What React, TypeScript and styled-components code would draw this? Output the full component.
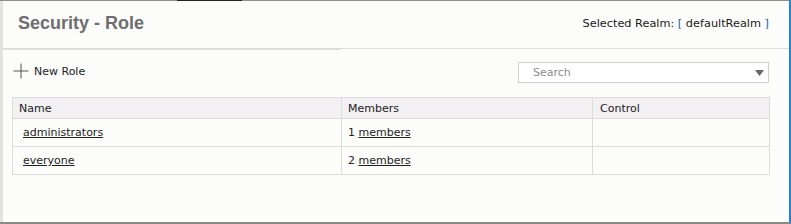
import styled, { createGlobalStyle } from "styled-components";

const GlobalStyle = createGlobalStyle`
  html, body {
    margin: 0;
    padding: 0;
    background: #fcfdfb;
  }
`;

const roles = [
  { name: "administrators", members: 1 },
  { name: "everyone", members: 2 },
];

const App = () => {
  return (
    <>
      <GlobalStyle />
      <Frame>
        <TopRule>
          <RuleSegment $w={177} />
          <RuleSegment $w={65} $dark />
          <RuleSegment />
        </TopRule>
        <Body>
          <Header>
            <Title>Security - Role</Title>
            <Realm>
              Selected Realm: <Bracket>[</Bracket> defaultRealm <Bracket>]</Bracket>
            </Realm>
          </Header>
          <HeaderRule>
            <HeaderRuleStrong />
            <HeaderRuleLight />
          </HeaderRule>
          <Toolbar>
            <NewRole>
              <svg width="16" height="16" viewBox="0 0 16 16">
                <path d="M8 0.5v15M0.5 8h15" stroke="#555" strokeWidth="1" fill="none" />
              </svg>
              New Role
            </NewRole>
            <SearchBox>
              <SearchText>Search</SearchText>
              <svg width="9" height="6" viewBox="0 0 9 6">
                <path d="M0 0h9L4.5 6z" fill="#666" />
              </svg>
            </SearchBox>
          </Toolbar>
          <Table>
            <colgroup>
              <col style={{ width: 329 }} />
              <col style={{ width: 251 }} />
              <col />
            </colgroup>
            <thead>
              <tr>
                <Th>Name</Th>
                <Th>Members</Th>
                <Th $pad={7}>Control</Th>
              </tr>
            </thead>
            <tbody>
              {roles.map((r) => (
                <tr key={r.name}>
                  <Td $pad={10}>
                    <Link>{r.name}</Link>
                  </Td>
                  <Td>
                    {r.members} <Link>members</Link>
                  </Td>
                  <Td />
                </tr>
              ))}
            </tbody>
          </Table>
        </Body>
      </Frame>
    </>
  );
};

export default App;

const Frame = styled.div`
  width: 791px;
  height: 224px;
  box-sizing: border-box;
  display: flex;
  flex-direction: column;
  background: #fcfdfb;
  border-right: 2px solid #2a7ed6;
  border-bottom: 2px solid #8a8a8a;
  overflow: hidden;
`;

const TopRule = styled.div`
  display: flex;
  height: 1px;
  flex-shrink: 0;
`;

const RuleSegment = styled.div<{ $w?: number; $dark?: boolean }>`
  height: 1px;
  ${(p) => (p.$w ? `width: ${p.$w}px;` : "flex: 1;")}
  background: ${(p) => (p.$dark ? "#1f2420" : "#8f8f8f")};
`;

const Body = styled.div`
  flex: 1;
  display: flex;
  flex-direction: column;
  border-left: 3px solid #e2e2e2;
`;

const Header = styled.div`
  height: 47px;
  display: flex;
  align-items: center;
  justify-content: space-between;
  padding: 0 20px 2px 15px;
  box-sizing: border-box;
`;

const Title = styled.h1`
  margin: 0;
  font-family: "Liberation Sans", Arial, sans-serif;
  font-weight: bold;
  font-size: 18px;
  color: #6e6e6e;
`;

const Realm = styled.div`
  font-family: "DejaVu Sans", Verdana, sans-serif;
  font-size: 11.3px;
  color: #1a1a1a;
`;

const Bracket = styled.span`
  color: #1e5fb0;
`;

const HeaderRule = styled.div`
  display: flex;
  align-items: flex-start;
  height: 2px;
`;

const HeaderRuleStrong = styled.div`
  width: 338px;
  height: 2px;
  background: #dcdcdc;
`;

const HeaderRuleLight = styled.div`
  flex: 1;
  height: 1px;
  background: #dcdcdc;
`;

const Toolbar = styled.div`
  display: flex;
  justify-content: space-between;
  align-items: flex-start;
  padding: 12px 20px 0 10px;
  height: 47px;
  box-sizing: border-box;
`;

const NewRole = styled.div`
  display: flex;
  align-items: center;
  gap: 5px;
  font-family: "DejaVu Sans", Verdana, sans-serif;
  font-size: 11px;
  color: #222;
  margin-top: 1px;
`;

const SearchBox = styled.div`
  width: 251px;
  height: 21px;
  box-sizing: border-box;
  border: 1px solid #cfcfcf;
  display: flex;
  align-items: center;
  justify-content: space-between;
  padding: 0 4px 0 14px;
  background: #fff;
`;

const SearchText = styled.span`
  font-family: "DejaVu Sans", Verdana, sans-serif;
  font-size: 11px;
  color: #8a8a8a;
`;

const Table = styled.table`
  margin-left: 9px;
  width: 758px;
  table-layout: fixed;
  border-collapse: collapse;
  font-family: "DejaVu Sans", Verdana, sans-serif;
  font-size: 11px;
  color: #222;
`;

const Th = styled.th<{ $pad?: number }>`
  height: 20px;
  padding: 0 5px 0 ${(p) => p.$pad ?? 6}px;
  text-align: left;
  font-weight: normal;
  background: #f2f0f3;
  border: 1px solid #dcdcdc;
`;

const Td = styled.td<{ $pad?: number }>`
  height: 27px;
  padding: 0 5px 0 ${(p) => p.$pad ?? 6}px;
  border: 1px solid #dcdcdc;
`;

const Link = styled.a`
  color: #222;
  text-decoration: underline;
  cursor: pointer;
`;
